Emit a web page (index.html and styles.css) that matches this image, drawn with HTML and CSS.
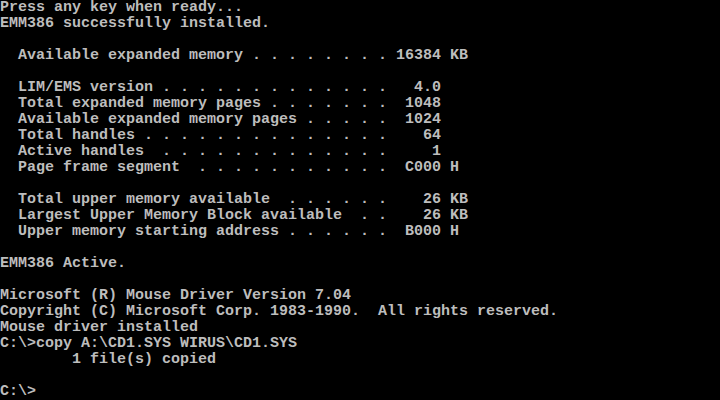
FILE: index.html
```html
<!DOCTYPE html>
<html lang="en">

<head>
    <meta charset="UTF-8">
    <meta name="viewport" content="width=device-width, initial-scale=1.0">
    <title>DOS</title>
    <link rel="stylesheet" href="styles.css">
</head>

<body>
<pre class="screen">
Press any key when ready...
EMM386 successfully installed.

  Available expanded memory . . . . . . . . 16384 KB

  LIM/EMS version . . . . . . . . . . . . .   4.0
  Total expanded memory pages . . . . . . .  1048
  Available expanded memory pages . . . . .  1024
  Total handles . . . . . . . . . . . . . .    64
  Active handles  . . . . . . . . . . . . .     1
  Page frame segment  . . . . . . . . . . .  C000 H

  Total upper memory available  . . . . . .    26 KB
  Largest Upper Memory Block available  . .    26 KB
  Upper memory starting address . . . . . .  B000 H

EMM386 Active.

Microsoft (R) Mouse Driver Version 7.04
Copyright (C) Microsoft Corp. 1983-1990.  All rights reserved.
Mouse driver installed
C:\>copy A:\CD1.SYS WIRUS\CD1.SYS
        1 file(s) copied

C:\></pre>
</body>

</html>
```

FILE: styles.css
```css
body {
    margin: 0;
    background: #000;
}

.screen {
    margin: 0;
    width: 720px;
    height: 400px;
    overflow: hidden;
    font-family: "Liberation Mono", monospace;
    font-size: 15px;
    font-weight: bold;
    line-height: 16px;
    color: #bdbdbd;
    white-space: pre;
}
```
